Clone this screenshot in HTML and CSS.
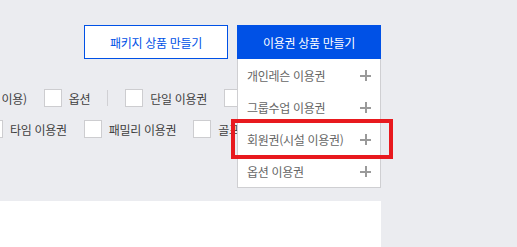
FILE: index.html
```html
<!DOCTYPE html>
<html lang="ko">
<head>
<meta charset="utf-8">
<link rel="stylesheet" href="styles.css">
</head>
<body>
<div class="page">
  <div class="main">
    <div class="actions">
      <button class="btn btn-outline">패키지 상품 만들기</button>
      <div class="create-menu">
        <button class="btn btn-primary">이용권 상품 만들기</button>
        <ul class="dropdown">
          <li class="dropdown-item"><span>개인레슨 이용권</span><span class="plus"></span></li>
          <li class="dropdown-item"><span>그룹수업 이용권</span><span class="plus"></span></li>
          <li class="dropdown-item"><span>회원권(시설 이용권)</span><span class="plus"></span></li>
          <li class="dropdown-item"><span>옵션 이용권</span><span class="plus"></span></li>
          <div class="highlight"></div>
        </ul>
      </div>
    </div>
    <div class="filters">
      <div class="filter-row row-1">
        <label class="check"><span class="box"></span><span>회원권(시설 이용)</span></label>
        <label class="check"><span class="box"></span><span>옵션</span></label>
        <span class="divider"></span>
        <label class="check"><span class="box"></span><span>단일 이용권</span></label>
        <label class="check"><span class="box"></span><span>기간 이용권</span></label>
      </div>
      <div class="filter-row row-2">
        <label class="check"><span class="box"></span><span>타임 이용권</span></label>
        <label class="check"><span class="box"></span><span>패밀리 이용권</span></label>
        <label class="check"><span class="box"></span><span>골프 이용권</span></label>
      </div>
    </div>
    <div class="panel"></div>
  </div>
</div>
</body>
</html>
```
FILE: styles.css
```css
* { box-sizing: border-box; }
html, body { margin: 0; padding: 0; }
body {
  background: #ebecf0;
  font-family: "Noto Sans CJK KR", "Noto Sans", sans-serif;
  overflow: hidden;
  width: 517px;
  height: 247px;
}
.page { width: 517px; }
.main { width: 381px; }
.actions {
  display: flex;
  justify-content: flex-end;
  gap: 9px;
  padding-top: 25px;
}
.btn {
  width: 144px;
  height: 34px;
  font-family: inherit;
  font-size: 12px;
  letter-spacing: -0.3px;
  padding: 0;
  cursor: pointer;
}
.btn-outline {
  background: #fff;
  border: 1px solid #0051e6;
  color: #0051e6;
}
.btn-primary {
  background: #0051e6;
  border: none;
  color: #fff;
  display: block;
}
.create-menu { position: relative; }
.dropdown {
  position: absolute;
  top: 100%;
  left: 0;
  width: 144px;
  margin: 0;
  padding: 0;
  list-style: none;
  background: #fff;
  border: 1px solid #cfcfd2;
  border-top: none;
  z-index: 2;
}
.dropdown-item {
  height: 32px;
  display: flex;
  align-items: center;
  justify-content: space-between;
  padding: 0 9px 0 9px;
  font-size: 12px;
  letter-spacing: -0.3px;
  color: #666;
}
.plus {
  position: relative;
  width: 11px;
  height: 11px;
}
.plus::before, .plus::after {
  content: "";
  position: absolute;
  background: #9a9a9a;
}
.plus::before { left: 0; right: 0; top: 5px; height: 2px; }
.plus::after { top: 0; bottom: 0; left: 5px; width: 2px; }
.highlight {
  position: absolute;
  left: -7px;
  top: 60px;
  width: 162px;
  height: 40px;
  border: 4px solid #e8191e;
  pointer-events: none;
}
.filters {
  padding-top: 30px;
  height: 142px;
}
.filter-row {
  display: flex;
  align-items: center;
  height: 18px;
  gap: 17px;
  white-space: nowrap;
  font-size: 12px;
  letter-spacing: -0.3px;
  color: #3f3f3f;
}
.row-1 { margin-left: -84px; }
.row-2 { margin-left: -15px; margin-top: 13px; }
.check {
  display: flex;
  align-items: center;
  gap: 7px;
}
.box {
  width: 18px;
  height: 18px;
  background: #fff;
  border: 1px solid #cdcdd0;
  flex: none;
}
.divider {
  width: 1px;
  height: 16px;
  background: #d0d0d4;
}
.panel {
  background: #fff;
  height: 46px;
}
```
